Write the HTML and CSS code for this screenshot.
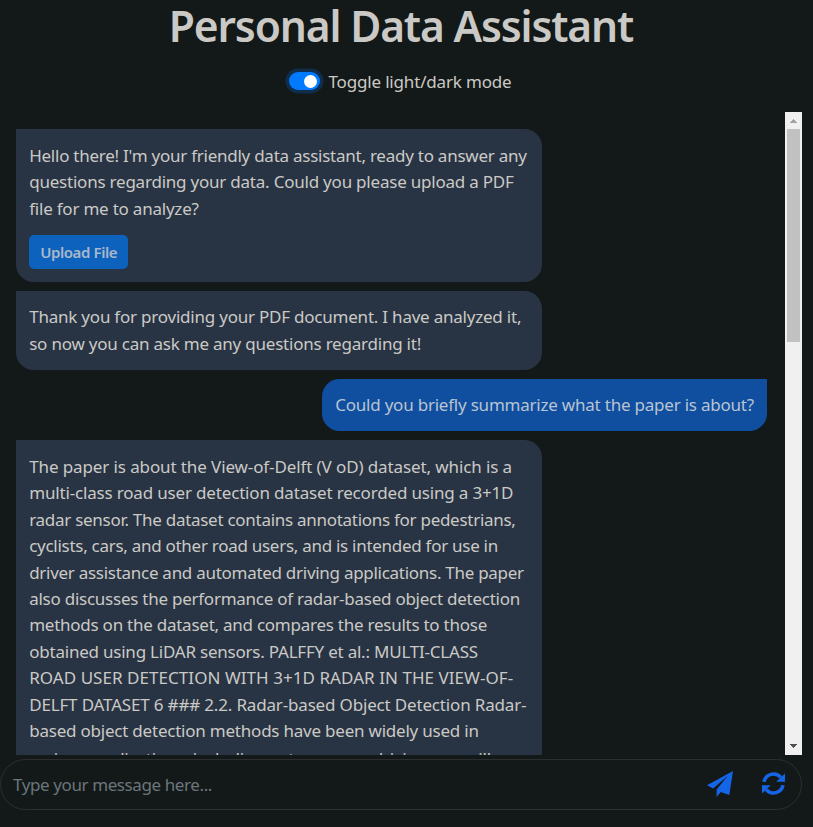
FILE: index.html
```html
<!DOCTYPE html>
<html lang="en">
<head>
<meta charset="utf-8">
<title>Personal Data Assistant</title>
<link rel="stylesheet" href="styles.css">
</head>
<body>
<div class="app">
  <header class="header">
    <h1 class="title">Personal Data Assistant</h1>
    <div class="mode"><span class="switch"><span class="knob"></span></span><span class="mode-label">Toggle light/dark mode</span></div>
  </header>
  <main class="chat">
    <div class="messages">
      <div class="bubble bot">
        <div><span class="t1">Hello there! I'm your friendly data assistant, ready to answer any</span><br>questions regarding your data. Could you please upload a PDF<br>file for me to analyze?</div>
        <button class="upload">Upload File</button>
      </div>
      <div class="bubble bot">Thank you for providing your PDF document. I have analyzed it,<br>so now you can ask me any questions regarding it!</div>
      <div class="bubble user">Could you briefly summarize what the paper is about?</div>
      <div class="bubble bot"><span class="t4">The paper is about the View-of-Delft (V oD) dataset, which is a</span><br><span class="t3">multi-class road user detection dataset recorded using a 3+1D</span><br><span class="t0">radar sensor. The dataset contains annotations for pedestrians,</span><br><span class="t0">cyclists, cars, and other road users, and is intended for use in</span><br><span class="t0">driver assistance and automated driving applications. The paper</span><br><span class="t1">also discusses the performance of radar-based object detection</span><br><span class="t1">methods on the dataset, and compares the results to those</span><br>obtained using LiDAR sensors. PALFFY et al.: MULTI-CLASS<br><span class="t5">ROAD USER DETECTION WITH 3+1D RADAR IN THE VIEW-OF-</span><br><span class="t3">DELFT DATASET 6 ### 2.2. Radar-based Object Detection Radar-</span><br>based object detection methods have been widely used in<br><span class="next">various applications, including autonomous driving, surveillance,</span></div>
    </div>
    <div class="scrollbar">
      <svg class="arrow" viewBox="0 0 17 17"><path d="M5 11h7v-1h-1V9h-1V8H9V7H8v1H7v1H6v1H5z" fill="#a3a3a3"/></svg>
      <div class="thumb"></div>
      <svg class="arrow" viewBox="0 0 17 17"><path d="M5 6h7v1h-1v1h-1v1H9v1H8V9H7V8H6V7H5z" fill="#505050"/></svg>
    </div>
  </main>
  <footer class="composer">
    <span class="placeholder">Type your message here...</span>
    <svg class="send" viewBox="0 0 26 26"><path fill="#1565e8" d="M26 0 0 14.300 6.200 17.400 20.800 4.800 9.600 18.600V26L13.800 20.900 22.300 24z"/></svg>
    <svg class="sync" viewBox="0 0 23 23"><path fill="none" stroke="#1565e8" stroke-width="3.500" d="M2 9.800A9.700 9.700 0 0 1 18.800 5.300M21 13.200A9.700 9.700 0 0 1 4.200 17.700"/><path fill="#1565e8" d="M23 1.600V9.700H14.200zM0 21.400V13.300H8.800z"/></svg>
  </footer>
</div>
</body>
</html>
```
FILE: styles.css
```css
* { box-sizing: border-box; }
body {
  margin: 0;
  height: 827px;
  overflow: hidden;
  background: #131918;
  color: #cbc9c6;
  font-family: "Noto Sans", "Open Sans", sans-serif;
  font-size: 17px;
  line-height: 26.4px;
  letter-spacing: -0.22px;
}
.t0 { letter-spacing: -0.28px; }
.t1 { letter-spacing: -0.25px; }
.t3 { letter-spacing: -0.17px; }
.t4 { letter-spacing: -0.11px; }
.t5 { letter-spacing: 0.05px; }
.next { display: inline-block; padding-top: 2px; }
.app { width: 802px; height: 827px; display: flex; flex-direction: column; }
.header { height: 112px; flex: none; text-align: center; }
.title { margin: 0; font-size: 42.5px; font-weight: 600; line-height: 52px; letter-spacing: -1.15px; white-space: nowrap; }
.mode { display: flex; justify-content: center; align-items: center; margin-top: 16px; padding-right: 1px; gap: 8px; }
.mode-label { letter-spacing: -0.17px; padding-top: 1px; margin-bottom: -1px; }
.switch {
  width: 31px; height: 18px; border-radius: 9px; background: #007bff;
  box-shadow: 0 0 0 3.5px #102d4b; display: flex; justify-content: flex-end; align-items: center; padding-right: 3px;
}
.knob { width: 13px; height: 13px; border-radius: 50%; background: #fff; }
.chat { height: 643px; flex: none; display: flex; overflow: hidden; }
.messages { flex: 1; padding: 17px 18px 0 16px; display: flex; flex-direction: column; gap: 8.8px; align-items: flex-start; }
.bubble { flex: none; padding: 13.8px 13.2px 12.6px; white-space: nowrap; }
.bot { width: 526px; background: #283443; border-radius: 0 17.6px 17.6px 17.6px; }
.user { align-self: flex-end; width: 445px; background: #104e9f; color: #b8c4d2; border-radius: 17.6px 0 17.6px 17.6px; }
.upload {
  display: block; margin: 12.6px 0 0.6px; width: 99px; height: 34px; padding: 0;
  border: 0; border-radius: 5px; background: #0d62be; color: #a9b8c8;
  font: 600 15px/34px "Noto Sans", "Open Sans", sans-serif; letter-spacing: -0.4px;
}
.scrollbar { width: 17px; background: #f0f0f0; display: flex; flex-direction: column; align-items: center; }
.arrow { width: 17px; height: 17px; display: block; flex: none; shape-rendering: crispEdges; }
.thumb { width: 13px; height: 213px; background: #c1c1c1; margin-bottom: auto; }
.composer {
  height: 51px; margin-top: 4px; flex: none; display: flex; align-items: center;
  border: 1px solid #2b302f; border-radius: 26px; padding: 0 16px 0 12px; color: #6b757c;
}
.placeholder { flex: 1; letter-spacing: -0.4px; padding-top: 1px; }
.send { width: 26px; height: 26px; margin: 0 29px 2px 0; }
.sync { width: 23px; height: 23px; margin-bottom: 2px; }
```
